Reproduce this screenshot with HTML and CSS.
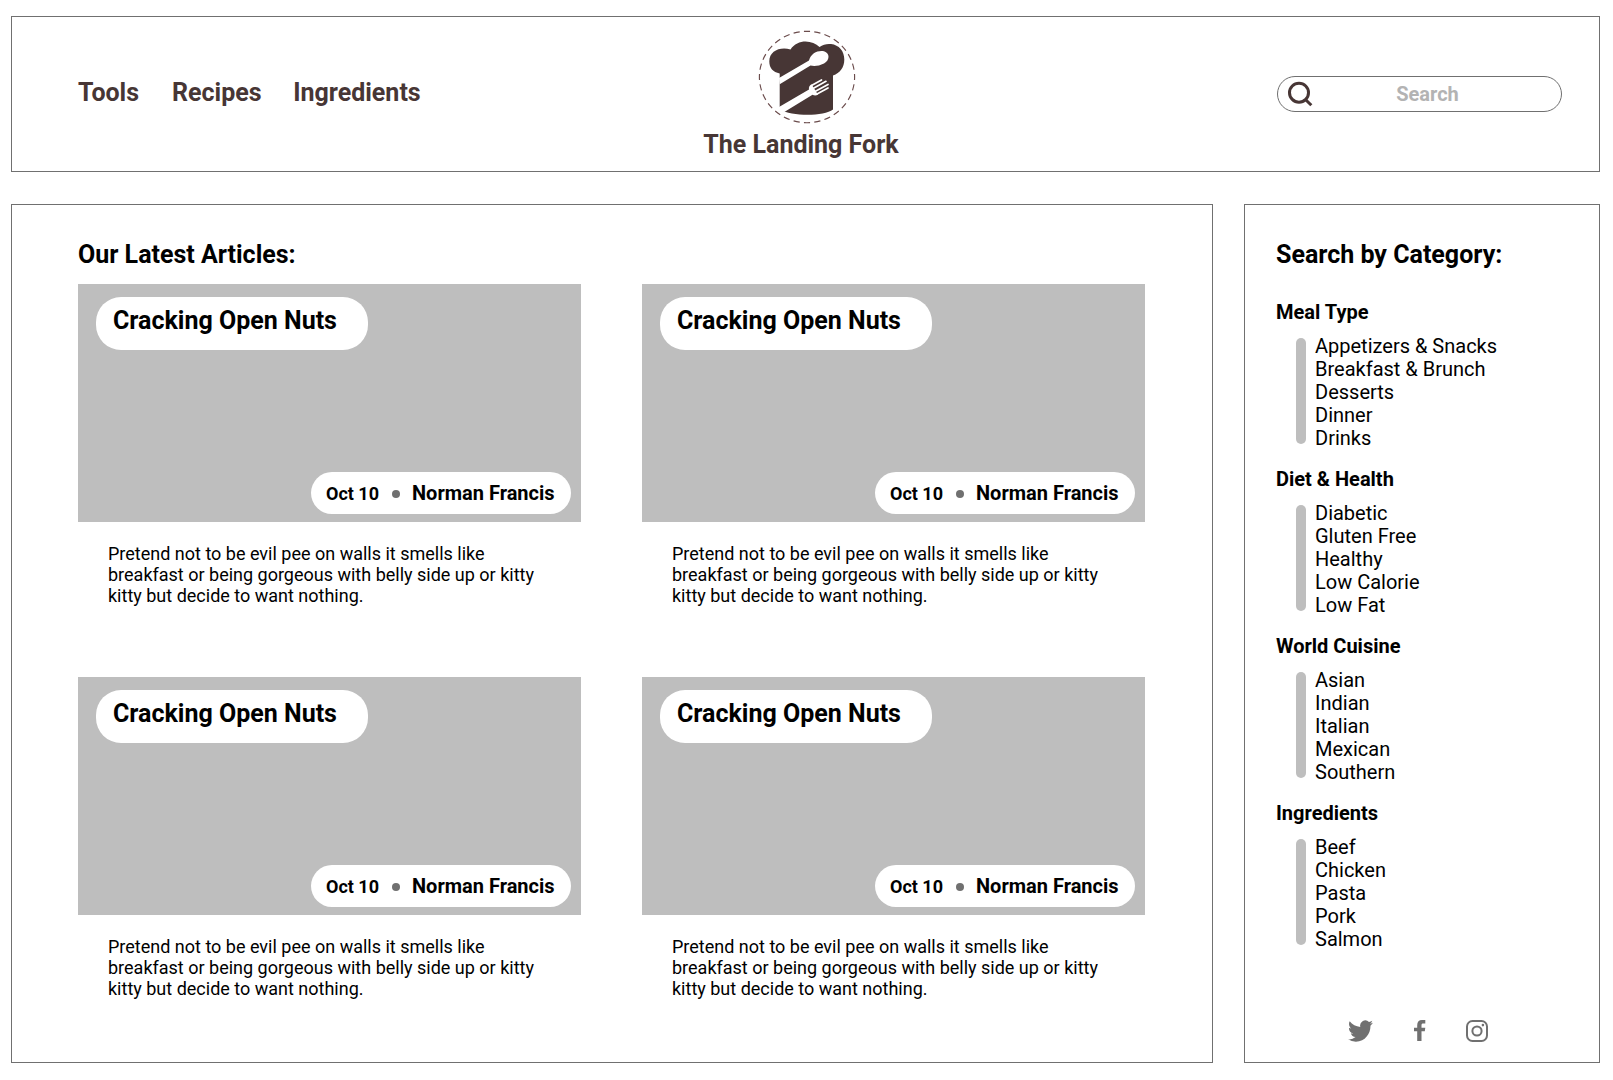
FILE: index.html
```html
<!DOCTYPE html>
<html lang="en">
<head>
<meta charset="utf-8">
<title>The Landing Fork</title>
<link rel="stylesheet" href="styles.css">
</head>
<body>
<header class="header">
  <nav class="nav"><a>Tools</a><a>Recipes</a><a>Ingredients</a></nav>
  <div class="brand">
    <svg class="logo" viewBox="0 0 98 94" width="98" height="94">
      <ellipse cx="49" cy="47" rx="47.6" ry="45.7" fill="none" stroke="#6b4c4c" stroke-width="1.150" pathLength="280" stroke-dasharray="6 4" stroke-dashoffset="3"/>
      <path fill="#473635" d="M21.700 43.500C15 42 11.300 38 11.300 31.500C11.300 21 22 16.500 32.500 19.500C36 14 42 11.500 47.500 11.500C53 11.500 58 13.700 61.500 17C65 14.500 69 13.500 73 14C81 15 86.300 21 86.300 29.500C86.300 37.500 82 43 75 45.500V79.500C66 86.500 34 86.500 21.700 79.500Z"/>
      <path fill="#fff" d="M21 48L51 30.500C53 23 60 20 66 21.200C72 23 72 30 66 33.500C61 36 56 36.500 52.500 35.500L21.700 54.200Z"/>
      <path fill="#fff" d="M21 77L51 59.500C50.500 57.500 51.500 55.500 53.500 54.300L60 64.800C58 65.800 56 65.600 54.500 64.800L25.500 82.500L21 83Z"/>
      <path d="M54 55.300L63.500 49.900M55.500 58.200L68 51.300M57.500 61.200L70 54.500M59 64L70 58" fill="none" stroke="#fff" stroke-width="1.700" stroke-linecap="round"/>
    </svg>
    <div class="name">The Landing Fork</div>
  </div>
  <div class="search">
    <svg width="28" height="28" viewBox="0 0 28 28" fill="none" stroke="#473635" stroke-width="3"><circle cx="13" cy="12.700" r="9.500"/><path d="M19.500 19.500L25.300 25.300"/></svg>
    <span>Search</span>
  </div>
</header>
<div class="columns">
  <main class="articles">
    <h1>Our Latest Articles:</h1>
    <div class="grid">
      <article><div class="photo"><h2>Cracking Open Nuts</h2><div class="meta"><span class="date">Oct 10</span><i></i><b>Norman Francis</b></div></div><p>Pretend not to be evil pee on walls it smells like breakfast or being gorgeous with belly side up or kitty kitty but decide to want nothing.</p></article>
      <article><div class="photo"><h2>Cracking Open Nuts</h2><div class="meta"><span class="date">Oct 10</span><i></i><b>Norman Francis</b></div></div><p>Pretend not to be evil pee on walls it smells like breakfast or being gorgeous with belly side up or kitty kitty but decide to want nothing.</p></article>
      <article><div class="photo"><h2>Cracking Open Nuts</h2><div class="meta"><span class="date">Oct 10</span><i></i><b>Norman Francis</b></div></div><p>Pretend not to be evil pee on walls it smells like breakfast or being gorgeous with belly side up or kitty kitty but decide to want nothing.</p></article>
      <article><div class="photo"><h2>Cracking Open Nuts</h2><div class="meta"><span class="date">Oct 10</span><i></i><b>Norman Francis</b></div></div><p>Pretend not to be evil pee on walls it smells like breakfast or being gorgeous with belly side up or kitty kitty but decide to want nothing.</p></article>
    </div>
  </main>
  <aside class="sidebar">
    <h1>Search by Category:</h1>
    <section><h3>Meal Type</h3><div class="group"><ul><li>Appetizers &amp; Snacks</li><li>Breakfast &amp; Brunch</li><li>Desserts</li><li>Dinner</li><li>Drinks</li></ul></div></section>
    <section><h3>Diet &amp; Health</h3><div class="group"><ul><li>Diabetic</li><li>Gluten Free</li><li>Healthy</li><li>Low Calorie</li><li>Low Fat</li></ul></div></section>
    <section><h3>World Cuisine</h3><div class="group"><ul><li>Asian</li><li>Indian</li><li>Italian</li><li>Mexican</li><li>Southern</li></ul></div></section>
    <section><h3>Ingredients</h3><div class="group"><ul><li>Beef</li><li>Chicken</li><li>Pasta</li><li>Pork</li><li>Salmon</li></ul></div></section>
    <div class="social">
      <svg class="twitter" width="25" height="22" viewBox="0 2 24 20" preserveAspectRatio="none"><path d="M23.950 4.570a10 10 0 0 1-2.820.770 4.960 4.960 0 0 0 2.160-2.720c-.950.550-2 .950-3.130 1.180a4.920 4.920 0 0 0-8.380 4.480C7.690 8.090 4.070 6.130 1.640 3.160a4.820 4.820 0 0 0-.670 2.480c0 1.700.870 3.210 2.190 4.100a4.900 4.900 0 0 1-2.230-.620v.060a4.920 4.920 0 0 0 3.950 4.830 5 5 0 0 1-2.210.080 4.940 4.940 0 0 0 4.600 3.420A9.870 9.870 0 0 1 0 19.540a13.990 13.990 0 0 0 7.560 2.210c9.050 0 14-7.500 14-13.980 0-.210 0-.420-.020-.630a9.940 9.940 0 0 0 2.410-2.570z"/></svg>
      <svg class="facebook" width="12" height="21" viewBox="0 0 12 21"><path d="M3.200 21V11.300H0V7.700H3.200V5.200C3.200 1.800 5 0 8 0H11.300V3.500H9.300C7.900 3.500 7.500 4.100 7.500 5.300V7.700H11.300L10.800 11.300H7.500V21Z"/></svg>
      <svg class="instagram" width="22" height="22" viewBox="0 0 22 22"><rect x="1" y="1" width="20" height="20" rx="5.500" fill="none" stroke="#707070" stroke-width="2"/><circle cx="11" cy="11" r="4.600" fill="none" stroke="#707070" stroke-width="2"/><circle cx="16.900" cy="5.100" r="1.300"/></svg>
    </div>
  </aside>
</div>
</body>
</html>
```
FILE: styles.css
```css
* { box-sizing: border-box; margin: 0; padding: 0; }
body { background: #fff; color: #000; font-family: Roboto, sans-serif; padding: 16px 13px 17px 11px; }
svg { display: block; }
.header { height: 156px; border: 1px solid #707070; display: grid; grid-template-columns: 689px 200px 1fr; align-items: start; color: #473635; }
.nav { display: flex; gap: 33px; padding: 61px 0 0 66px; font-size: 25px; line-height: 30px; font-weight: 700; }
.nav a:last-child { margin-left: -1.5px; }
.brand { padding-top: 13px; display: flex; flex-direction: column; align-items: center; }
.logo { margin-left: 11px; }
.name { font-size: 25px; line-height: 30px; font-weight: 700; margin-top: 6px; white-space: nowrap; }
.search { justify-self: end; margin: 59px 37px 0 0; width: 285px; height: 36px; border: 1px solid #707070; border-radius: 18px; display: flex; align-items: center; padding: 0 8px; }
.search span { width: 198px; margin-left: 14.5px; text-align: center; color: #b3b3b3; font-size: 20px; font-weight: 700; }
.columns { display: grid; grid-template-columns: 1202px 356px; gap: 31px; margin-top: 32px; }
.articles, .sidebar { border: 1px solid #707070; height: 859px; }
h1 { font-size: 25px; line-height: 30px; font-weight: 700; }
.articles { padding: 35px 66px 0; }
.grid { display: grid; grid-template-columns: 503px 503px; grid-template-rows: 393px 393px; column-gap: 61px; margin-top: 14px; }
.photo { background: #bebebe; height: 238px; padding: 13px 10px 8px 18px; display: flex; flex-direction: column; justify-content: space-between; }
h2 { width: 272px; height: 53px; border-radius: 25px; background: #fff; font-size: 25px; line-height: 30px; font-weight: 700; padding: 9px 0 0 17px; }
.meta { align-self: flex-end; width: 260px; height: 42px; border-radius: 21px; background: #fff; display: flex; align-items: center; padding: 0 15px; }
.date { font-size: 18px; font-weight: 700; width: 66px; }
.meta i { width: 8px; height: 8px; border-radius: 50%; background: #707070; margin-top: 2px; }
.meta b { font-size: 20px; margin-left: 12px; white-space: nowrap; }
.grid p { font-size: 18px; line-height: 21px; padding: 21px 40px 0 30px; }
.sidebar { padding: 35px 31px 0; display: flex; flex-direction: column; }
.sidebar section { height: 167px; }
.sidebar h1 + section { margin-top: 30px; }
h3 { font-size: 20px; line-height: 24px; font-weight: 700; }
.group { display: flex; margin: 13px 0 0 20px; }
.group::before { content: ""; width: 10px; height: 106px; margin-top: 1px; border-radius: 5px; background: #bebebe; }
.group ul { list-style: none; margin: -2px 0 0 9px; font-size: 20px; line-height: 23px; }
.social { display: flex; fill: #707070; margin: 52px 0 0 72px; }
.facebook { margin-left: 41px; }
.instagram { margin-left: 40px; }
```
